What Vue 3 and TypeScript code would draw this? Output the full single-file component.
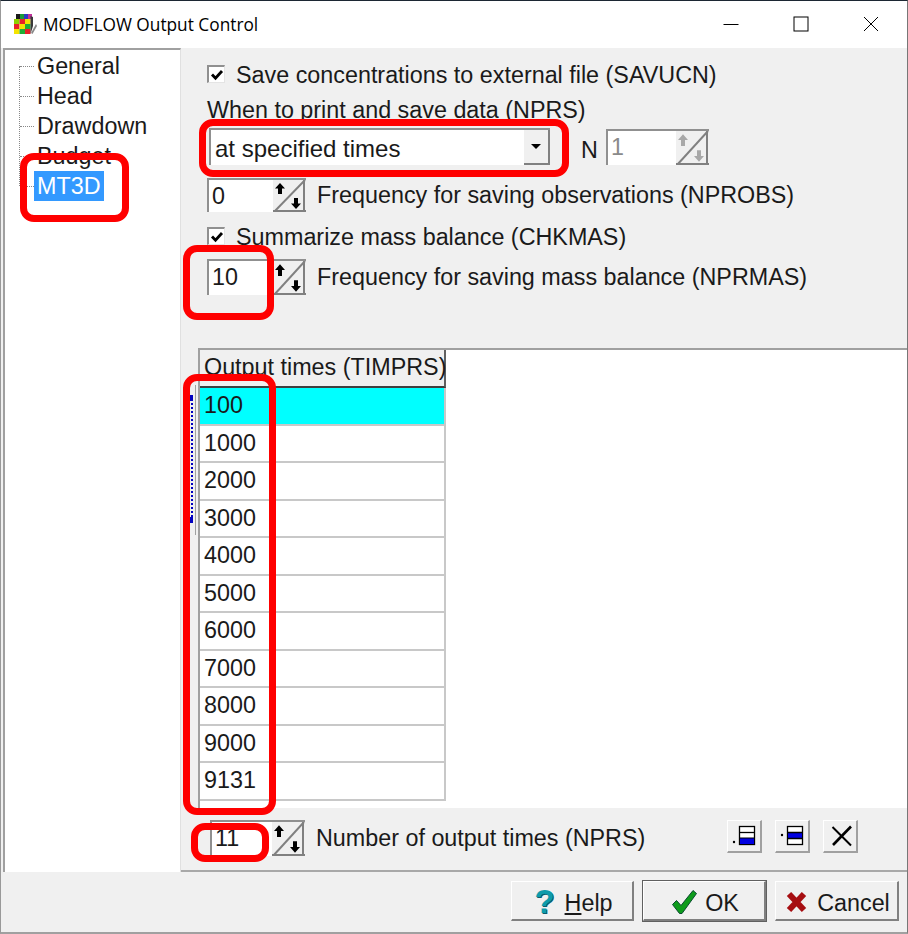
<script setup lang="ts">
const treeItems: string[] = ['General', 'Head', 'Drawdown', 'Budget', 'MT3D']
const times: number[] = [100, 1000, 2000, 3000, 4000, 5000, 6000, 7000, 8000, 9000, 9131]
const cube: { x: number; y: number; c: string }[] = [
  { x: 1, y: 6, c: '#8fd000' }, { x: 6.5, y: 6, c: '#e8202a' }, { x: 12, y: 6, c: '#f4e400' },
  { x: 1, y: 11, c: '#e8202a' }, { x: 6.5, y: 11, c: '#f4e400' }, { x: 12, y: 11, c: '#1fae35' },
  { x: 1, y: 16, c: '#f4e400' }, { x: 6.5, y: 16, c: '#1fae35' }, { x: 12, y: 16, c: '#e8202a' }
]
const cubeTop: { x: number; c: string }[] = [
  { x: 3, c: '#1a1a1a' }, { x: 7, c: '#1b9a3a' }, { x: 11, c: '#2a3ac0' }, { x: 15, c: '#c0309a' }
]
const arrows = 'M7 3l5 5.5H9V14H5V8.5H2zM23 29l5-5.500h-3V18h-4v5.500h-3z'
</script>

<template>
  <div class="window">
    <header class="titlebar">
      <svg class="app-icon" width="24" height="22" viewBox="0 0 24 22">
        <rect v-for="(s, i) in cubeTop" :key="i" :x="s.x" y="1" width="4" height="5" :fill="s.c" />
        <rect v-for="(s, i) in cube" :key="'f' + i" :x="s.x" :y="s.y" width="5.5" height="5" :fill="s.c" />
        <path d="M17.500 3l2.500 1v9l-2.500 8z" fill="#3a3a3a" />
        <path d="M23 11l-5 9 1.500 1 4.500-8z" fill="#888" />
      </svg>
      <span class="title">MODFLOW Output Control</span>
      <div class="caption">
        <span class="cap-btn"><svg width="16" height="16" viewBox="0 0 16 16"><path d="M0.500 8.500h15" stroke="#000" fill="none" /></svg></span>
        <span class="cap-btn"><svg width="16" height="16" viewBox="0 0 16 16"><rect x="1" y="1" width="14" height="14" stroke="#000" fill="none" /></svg></span>
        <span class="cap-btn"><svg width="16" height="16" viewBox="0 0 16 16"><path d="M1 1l14 14M15 1L1 15" stroke="#000" fill="none" /></svg></span>
      </div>
    </header>

    <div class="body">
      <nav class="tree">
        <div class="tree-rail"></div>
        <div v-for="item in treeItems" :key="item" class="tree-row">
          <span class="tick"></span>
          <span class="tree-label" :class="{ selected: item === 'MT3D' }">{{ item }}</span>
        </div>
      </nav>

      <main class="main">
        <section class="top">
          <label class="check-row first">
            <span class="check"><svg width="14" height="14" viewBox="0 0 14 14"><path d="M2 6.500l3.500 3.700 6.500-7.200" stroke="#000" stroke-width="2.800" fill="none" /></svg></span>
            Save concentrations to external file (SAVUCN)
          </label>
          <div class="when">When to print and save data (NPRS)</div>
          <div class="combo-row">
            <div class="combo">
              <span class="combo-text">at specified times</span>
              <span class="combo-btn"><i></i></span>
            </div>
            <span class="n-label">N</span>
            <div class="spin disabled n-spin">
              <span class="spin-value">1</span>
              <svg class="spin-btn" viewBox="0 0 33 32" preserveAspectRatio="none"><path d="M1 32L32 0" stroke="#808080" stroke-width="2" /><path :d="arrows" fill="#a8a8a8" /><path d="M31 0v32M0 31h33" stroke="#808080" stroke-width="2" /></svg>
            </div>
          </div>
          <div class="spin-row obs">
            <div class="spin small">
              <span class="spin-value">0</span>
              <svg class="spin-btn" viewBox="0 0 33 32" preserveAspectRatio="none"><path d="M1 32L32 0" stroke="#808080" stroke-width="2" /><path :d="arrows" fill="#000" /><path d="M31 0v32M0 31h33" stroke="#808080" stroke-width="2" /></svg>
            </div>
            <span class="spin-label">Frequency for saving observations (NPROBS)</span>
          </div>
          <label class="check-row second">
            <span class="check"><svg width="14" height="14" viewBox="0 0 14 14"><path d="M2 6.500l3.500 3.700 6.500-7.200" stroke="#000" stroke-width="2.800" fill="none" /></svg></span>
            Summarize mass balance (CHKMAS)
          </label>
          <div class="spin-row mass">
            <div class="spin">
              <span class="spin-value">10</span>
              <svg class="spin-btn" viewBox="0 0 33 32" preserveAspectRatio="none"><path d="M1 32L32 0" stroke="#808080" stroke-width="2" /><path :d="arrows" fill="#000" /><path d="M31 0v32M0 31h33" stroke="#808080" stroke-width="2" /></svg>
            </div>
            <span class="spin-label">Frequency for saving mass balance (NPRMAS)</span>
          </div>
        </section>

        <section class="grid-zone">
          <div class="gutter"><div class="splitter"></div></div>
          <div class="grid">
            <div class="grid-head">Output times (TIMPRS)</div>
            <div
              v-for="(t, i) in times"
              :key="t"
              class="grid-cell"
              :class="{ active: i === 0 }"
            >{{ t }}</div>
          </div>
        </section>

        <section class="bottom">
          <div class="spin count">
            <span class="spin-value">11</span>
            <svg class="spin-btn" viewBox="0 0 33 32" preserveAspectRatio="none"><path d="M1 32L32 0" stroke="#808080" stroke-width="2" /><path :d="arrows" fill="#000" /><path d="M31 0v32M0 31h33" stroke="#808080" stroke-width="2" /></svg>
          </div>
          <span class="spin-label">Number of output times (NPRS)</span>
          <div class="tools">
            <button class="tool">
              <svg width="35" height="33" viewBox="0 0 35 33"><circle cx="7" cy="22" r="1.200" fill="#000" /><rect x="12.500" y="6.500" width="15" height="18" fill="#fff" stroke="#000" stroke-width="1.300" /><path d="M13 12.500h14" stroke="#000" stroke-width="1.300" /><rect x="13" y="18" width="14" height="6" fill="#0000e0" /><path d="M13 18h14" stroke="#000" stroke-width="1" /></svg>
            </button>
            <button class="tool">
              <svg width="35" height="33" viewBox="0 0 35 33"><circle cx="7" cy="15" r="1.200" fill="#000" /><rect x="12.500" y="6.500" width="15" height="18" fill="#fff" stroke="#000" stroke-width="1.300" /><rect x="13" y="12.500" width="14" height="6" fill="#0000e0" /><path d="M13 12.500h14M13 18.500h14" stroke="#000" stroke-width="1.300" /></svg>
            </button>
            <button class="tool">
              <svg width="35" height="33" viewBox="0 0 35 33"><path d="M9.500 7L28 25.500" stroke="#000" stroke-width="2" fill="none" /><path d="M28 6.500L10 25" stroke="#000" stroke-width="2.600" fill="none" /></svg>
            </button>
          </div>
        </section>
      </main>
    </div>

    <footer class="footer">
      <button class="btn help">
        <span class="help-mark">?</span>
        <span><u>H</u>elp</span>
      </button>
      <button class="btn default">
        <svg width="25" height="24" viewBox="0 0 25 24"><path d="M0.500 14.500l4-4 4.500 5L21 0.500l3.500 3L10 23.500H7.500z" fill="#0e9c1c" stroke="#0a4a30" stroke-width="1" /></svg>
        <span>OK</span>
      </button>
      <button class="btn cancel">
        <svg width="21" height="22" viewBox="0 0 21 22"><path d="M3 3l15 16M18 3L3 19" stroke="#a60e12" stroke-width="6" fill="none" /></svg>
        <span>Cancel</span>
      </button>
    </footer>

    <div class="mark mark-tree"></div>
    <div class="mark mark-combo"></div>
    <div class="mark mark-ten"></div>
    <div class="mark mark-times"></div>
    <div class="mark mark-count"></div>
  </div>
</template>

<style>
html, body { margin: 0; padding: 0; background: #f0f0f0; }
</style>

<style scoped>
.window {
  position: relative;
  box-sizing: border-box;
  width: 908px;
  height: 934px;
  overflow: hidden;
  display: flex;
  flex-direction: column;
  background: #f0f0f0;
  color: #1a1a1a;
  font-family: "Liberation Sans", Arial, sans-serif;
  font-size: 23.330px;
  border-top: 1px solid #1c2733;
  border-right: 1px solid #777;
  border-bottom: 2px solid #a0a0a0;
  border-left: 1px solid #999;
}
.titlebar {
  flex: 0 0 47px;
  display: flex;
  align-items: center;
  background: #fff;
  color: #000;
  padding-left: 12px;
}
.app-icon { margin-right: 6px; margin-top: -1px; }
.title {
  font-family: "Open Sans", "Noto Sans", sans-serif;
  font-size: 17.300px;
  margin-top: -1px;
}
.caption { margin-left: auto; display: flex; margin-top: -1px; padding-right: 1px; }
.cap-btn {
  width: 70px;
  display: flex;
  justify-content: center;
  align-items: center;
}
.body { flex: 0 0 824px; display: flex; }
.tree {
  position: relative;
  box-sizing: border-box;
  margin-left: 2px;
  width: 178px;
  background: #fff;
  border-top: 2px solid #a0a0a0;
  border-left: 2px solid #a0a0a0;
  border-right: 1px solid #e0e0e0;
  padding-top: 1px;
}
.tree-rail {
  position: absolute;
  left: 14px;
  top: 16px;
  height: 120px;
  border-left: 1px dotted #888;
}
.tree-row { display: flex; align-items: center; height: 30px; padding-left: 15px; }
.tick { width: 14px; border-top: 1px dotted #888; }
.tree-label { padding: 0 3px; line-height: 30px; }
.tree-label.selected { background: #3399ff; color: #fff; }
.main { flex: 1; display: flex; flex-direction: column; min-width: 0; }
.top { flex: 0 0 300px; box-sizing: border-box; padding: 11px 0 0 26px; }
.check-row { display: flex; align-items: center; gap: 11px; box-sizing: border-box; padding-top: 2px; }
.check-row.first { height: 30px; }
.check-row.second { height: 24px; margin-top: 12px; }
.check {
  box-sizing: border-box;
  width: 18px;
  height: 18px;
  margin-bottom: 2px;
  display: inline-flex;
  align-items: center;
  justify-content: center;
  background: #fff;
  border-top: 2px solid #909090;
  border-left: 2px solid #909090;
  border-right: 1px solid #e4e4e4;
  border-bottom: 1px solid #e4e4e4;
}
.when { height: 39px; line-height: 43px; }
.combo-row { display: flex; align-items: center; height: 37px; }
.combo {
  box-sizing: border-box;
  width: 341px;
  height: 37px;
  margin-left: 2px;
  display: flex;
  align-items: center;
  background: #fff;
  border-top: 2px solid #909090;
  border-left: 2px solid #909090;
}
.combo-text { flex: 1; padding: 3px 0 0 4px; font-size: 24px; }
.combo-btn {
  box-sizing: border-box;
  width: 26px;
  height: 35px;
  display: flex;
  align-items: center;
  justify-content: center;
  background: #f0f0f0;
  border-right: 2px solid #808080;
  border-bottom: 2px solid #808080;
}
.combo-btn i {
  width: 0;
  height: 0;
  border-left: 5px solid transparent;
  border-right: 5px solid transparent;
  border-top: 5px solid #000;
}
.n-label { margin-left: 31px; width: 25px; padding-top: 8px; }
.spin {
  box-sizing: border-box;
  display: flex;
  align-items: stretch;
  width: 99px;
  height: 36px;
  background: #fff;
  border-top: 2px solid #909090;
  border-left: 2px solid #909090;
}
.spin.small { height: 34px; }
.n-spin { width: 103px; }
.spin-value { flex: 1; padding-left: 3px; line-height: 32px; }
.spin.disabled .spin-value { color: #8a8a8a; }
.spin-btn {
  flex: 0 0 33px;
  width: 33px;
  height: 100%;
  background: #f0f0f0;
}
.spin-row { display: flex; align-items: center; gap: 11px; }
.spin-row.obs { margin-top: 13px; }
.spin-row.mass { margin-top: 11px; }
.grid-zone { flex: 0 0 460px; display: flex; }
.gutter { flex: 0 0 17px; }
.splitter {
  box-sizing: border-box;
  width: 6px;
  height: 150px;
  margin: 37px 0 0 9px;
  border-right: 1px solid #a0a0a0;
  background:
    linear-gradient(#0000c0, #0000c0) 0 10px / 3px 6px no-repeat,
    linear-gradient(#0000c0, #0000c0) 0 132px / 3px 6px no-repeat,
    repeating-linear-gradient(#0000c0 0 2px, transparent 2px 4px) 1px 14px / 2px 120px no-repeat;
}
.grid {
  flex: 1;
  box-sizing: border-box;
  background: #fff;
  border-top: 2px solid #a0a0a0;
  border-left: 2px solid #a0a0a0;
}
.grid-head {
  box-sizing: border-box;
  width: 246px;
  height: 38px;
  line-height: 35px;
  padding-left: 4px;
  background: #f0f0f0;
  white-space: nowrap;
  border-right: 2px solid #606060;
  border-bottom: 2px solid #404040;
}
.grid-cell {
  box-sizing: border-box;
  width: 246px;
  height: 37.500px;
  line-height: 35px;
  padding-left: 4px;
  border-right: 2px solid #c8c8c8;
  border-bottom: 2px solid #c8c8c8;
}
.grid-cell.active { background: #00ffff; }
.bottom {
  flex: 1;
  display: flex;
  align-items: flex-start;
  box-sizing: border-box;
  padding: 12px 49px 0 29px;
  border-bottom: 2px solid #a8a8a8;
}
.count { width: 95px; }
.bottom .spin-label { margin-left: 11px; line-height: 36px; }
.tools { display: flex; gap: 13px; margin-left: auto; }
.tool {
  box-sizing: border-box;
  width: 35px;
  height: 33px;
  padding: 0;
  background: #f0f0f0;
  border: none;
  border-top: 1px solid #fff;
  border-left: 1px solid #fff;
  border-right: 2px solid #a0a0a0;
  border-bottom: 2px solid #a0a0a0;
}
.tool svg { display: block; margin: -1px 0 0 -1px; }
.footer {
  flex: 1;
  display: flex;
  gap: 9px;
  padding: 9px 0 0 510px;
}
.btn {
  box-sizing: border-box;
  width: 123px;
  height: 40px;
  padding: 6px 0 0 3px;
  display: flex;
  align-items: center;
  justify-content: center;
  gap: 8px;
  background: #f0f0f0;
  color: #1a1a1a;
  font: inherit;
  border: none;
  border-top: 1px solid #fff;
  border-left: 1px solid #fff;
  border-right: 2px solid #808080;
  border-bottom: 2px solid #808080;
}
.btn svg { margin-bottom: 4px; }
.btn.help { gap: 10px; }
.btn.cancel { width: 124px; gap: 10px; }
.btn.default { box-shadow: 0 0 0 1px #606060; }
.help-mark {
  color: #0d9bab;
  font-weight: 700;
  font-size: 33px;
  line-height: 1;
  margin-bottom: 4px;
  text-shadow: 1px 1px 0 #0a5c6e;
}
.mark {
  position: absolute;
  box-sizing: border-box;
  border: 7px solid #ff0000;
  border-radius: 14px;
  pointer-events: none;
}
.mark-tree { left: 19px; top: 152px; width: 109px; height: 69px; }
.mark-combo { left: 198px; top: 118px; width: 370px; height: 58px; }
.mark-ten { left: 182px; top: 244px; width: 91px; height: 75px; }
.mark-times { left: 182px; top: 373px; width: 93px; height: 441px; }
.mark-count { left: 190px; top: 822px; width: 78px; height: 39px; }
</style>
